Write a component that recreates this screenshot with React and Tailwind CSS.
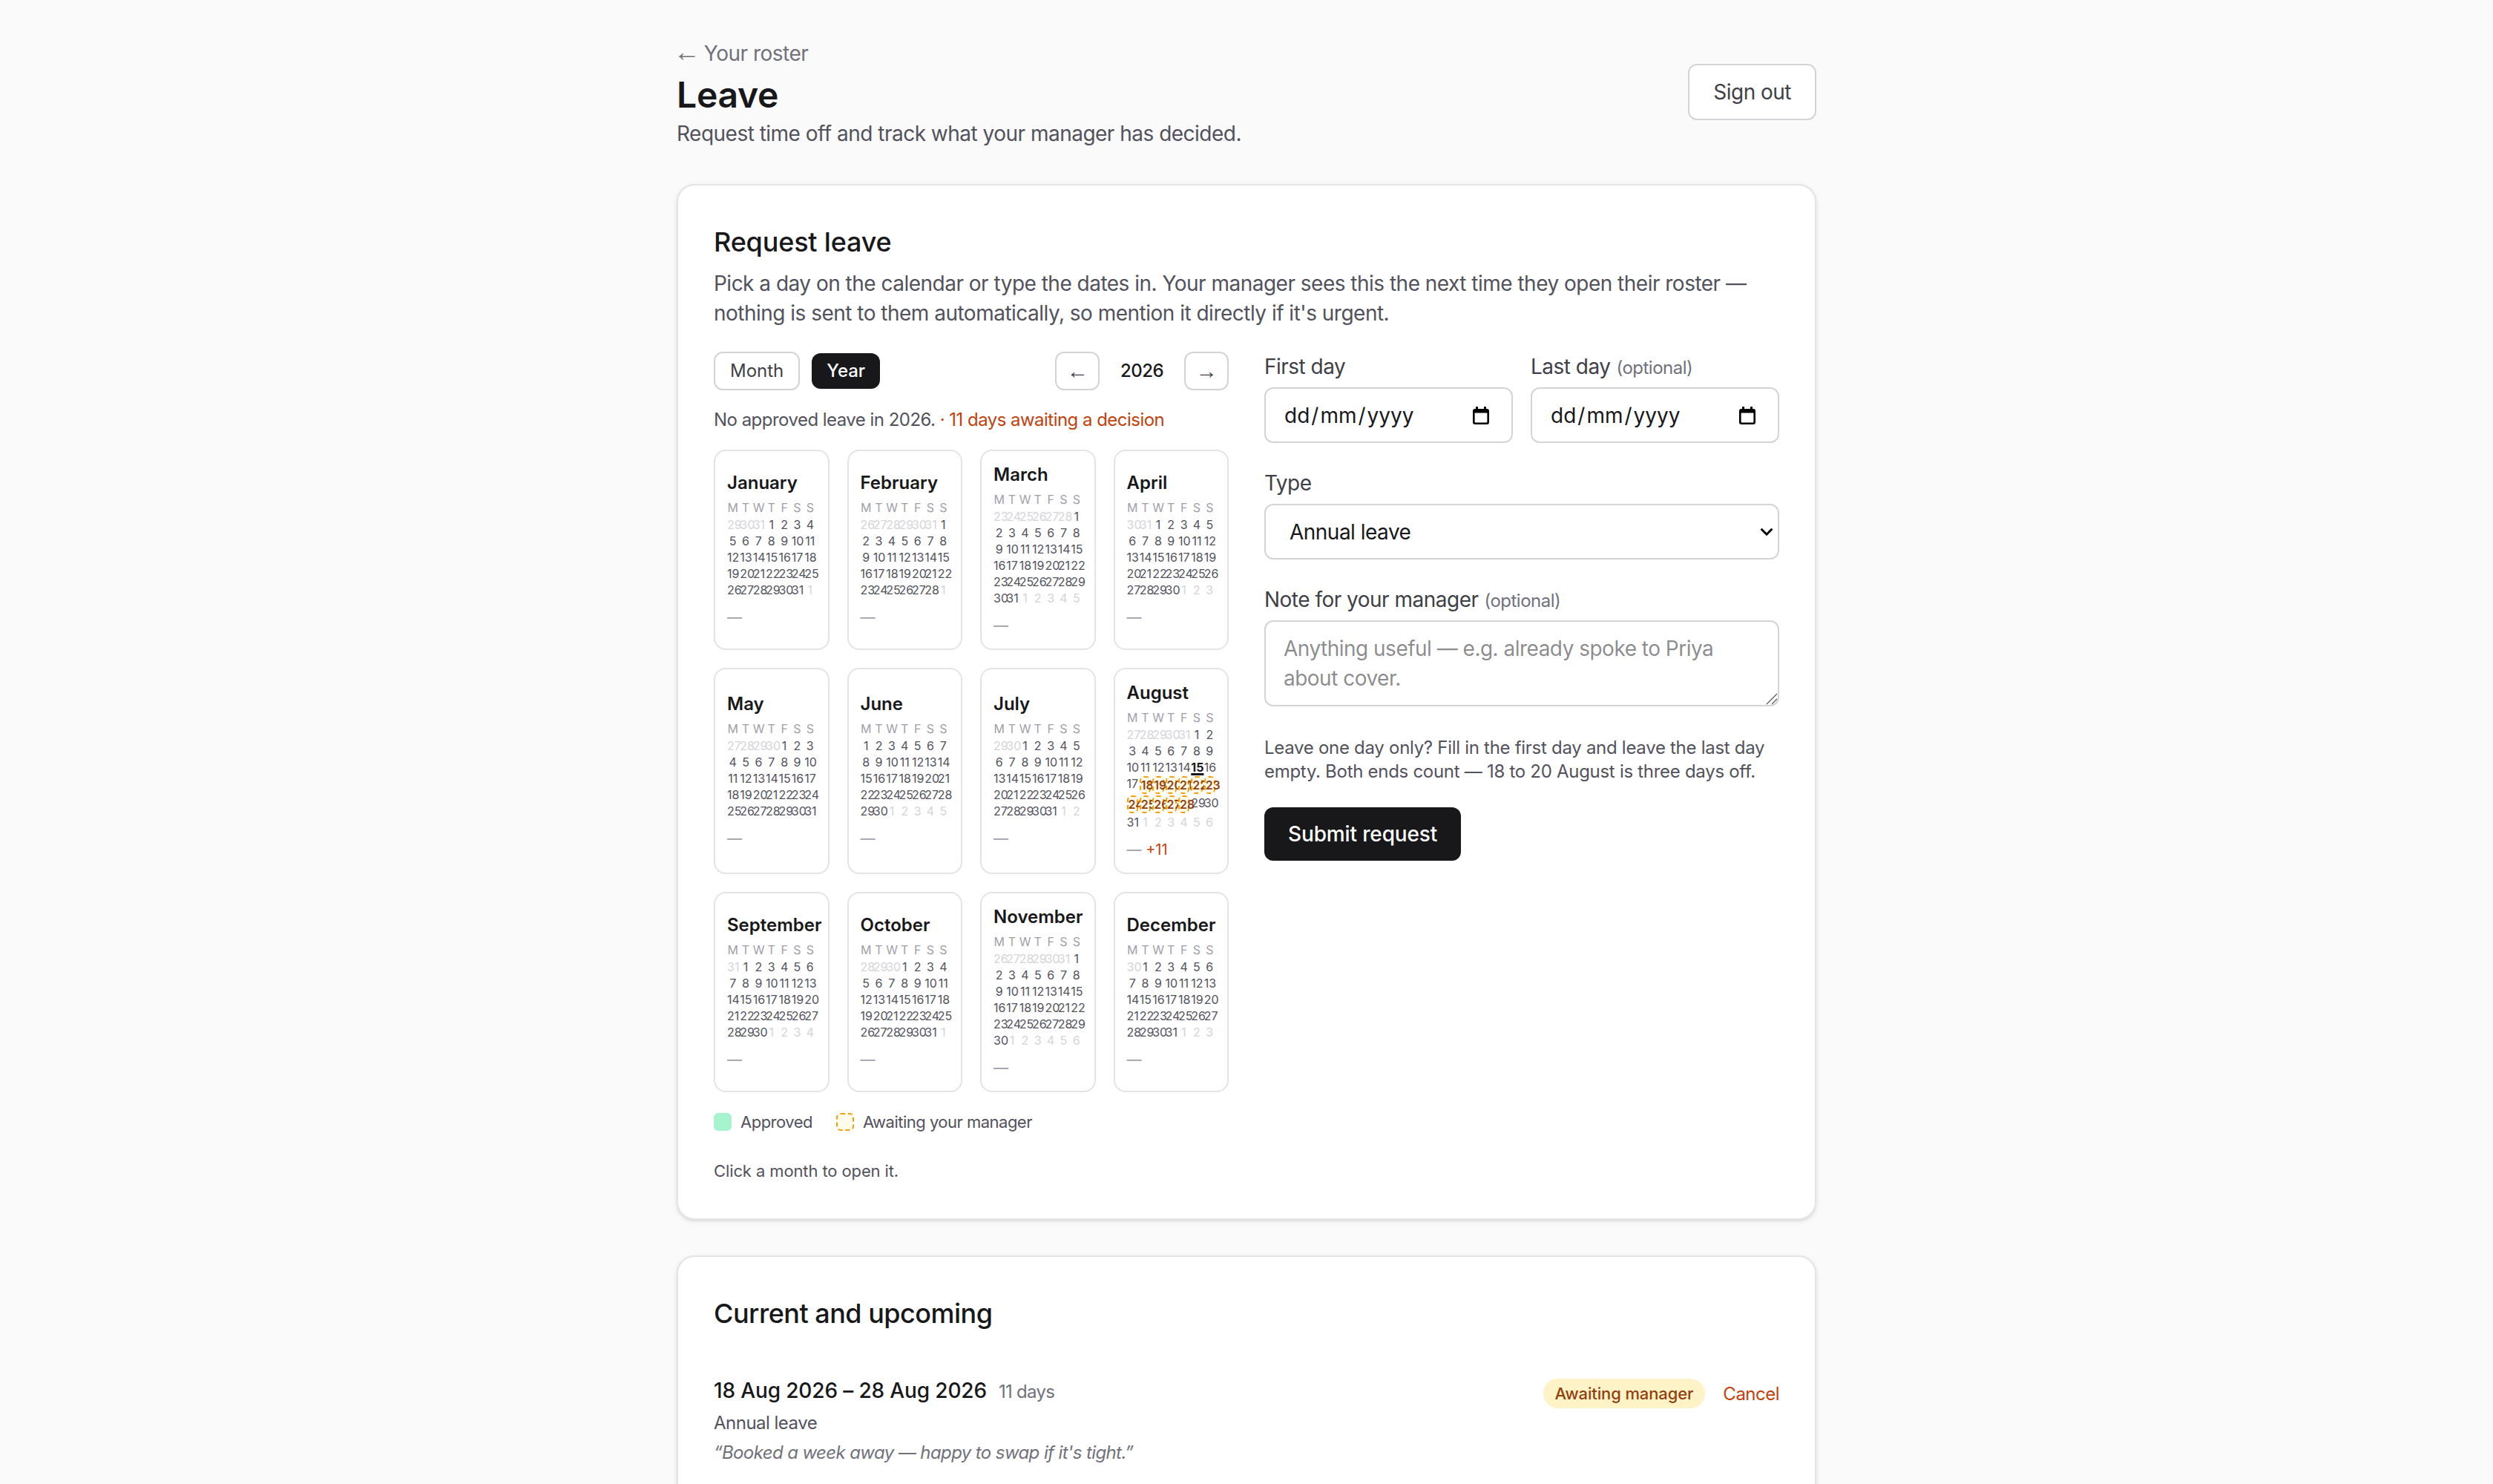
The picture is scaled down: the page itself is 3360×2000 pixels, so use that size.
import React from 'react';

const MONTHS = ['January', 'February', 'March', 'April', 'May', 'June', 'July', 'August', 'September', 'October', 'November', 'December'];
const WEEKDAYS = ['M', 'T', 'W', 'T', 'F', 'S', 'S'];

function buildDays(month) {
    const first = new Date(2026, month, 1);
    const last = new Date(2026, month + 1, 0);
    const lead = (first.getDay() + 6) % 7;
    const trail = (7 - ((lead + last.getDate()) % 7)) % 7;
    const days = [];
    for (let i = lead; i > 0; i--) {
        days.push({ day: new Date(2026, month, 1 - i).getDate(), outside: true });
    }
    for (let d = 1; d <= last.getDate(); d++) {
        days.push({ day: d, outside: false });
    }
    for (let i = 1; i <= trail; i++) {
        days.push({ day: i, outside: true });
    }
    return days;
}

function DayCell({ cell, month }) {
    if (cell.outside) {
        return <div className="text-center text-zinc-300">{cell.day}</div>;
    }
    const isAugust = month === 7;
    if (isAugust && cell.day >= 18 && cell.day <= 28) {
        return (
            <div className="relative text-center font-semibold text-[#92400e] bg-[#fffbeb] border border-dashed border-[#f59e0b] rounded-[3px]">
                {cell.day}
            </div>
        );
    }
    if (isAugust && cell.day === 15) {
        return <div className="relative z-10 text-center font-bold text-zinc-900 underline decoration-[1.5px] underline-offset-1">{cell.day}</div>;
    }
    return <div className="text-center text-zinc-600">{cell.day}</div>;
}

function MonthCard({ name, month }) {
    return (
        <button className="text-left tracking-normal bg-white border border-zinc-200 rounded-lg p-2">
            <div className="text-xs leading-4 font-semibold text-zinc-900 whitespace-nowrap">{name}</div>
            <div className="mt-[3px] grid grid-cols-7 gap-px text-[8px] leading-[10px]">
                {WEEKDAYS.map((w, i) => (
                    <div key={i} className="text-center text-zinc-400 leading-[11px]">{w}</div>
                ))}
                {buildDays(month).map((cell, i) => (
                    <DayCell key={i} cell={cell} month={month} />
                ))}
            </div>
            <div className="mt-1.5 text-[10px] leading-[15px] text-zinc-400">
                —{month === 7 && <span className="text-[#c2410c]"> +11</span>}
            </div>
        </button>
    );
}

function Label({ children, optional }) {
    return (
        <label className="block mb-1 text-sm text-zinc-700">
            {children}
            {optional && <span className="ml-1 text-xs text-zinc-500">(optional)</span>}
        </label>
    );
}

function DateField() {
    return (
        <div className="flex items-center justify-between h-[37.5px] pl-[12.5px] pr-3 text-sm tracking-normal bg-white border border-zinc-300 rounded-md">
            <span>dd<span className="mx-px">/</span>mm<span className="mx-px">/</span>yyyy</span>
            <svg width="11" height="12" viewBox="0 0 11 12" className="mr-[3px]">
                <path fillRule="evenodd" d="M2 0h1.5v1.5h4V0H9v1.5h.5A1.5 1.5 0 0 1 11 3v7.5A1.5 1.5 0 0 1 9.5 12h-8A1.5 1.5 0 0 1 0 10.5V3a1.5 1.5 0 0 1 1.5-1.5H2V0zM1.3 4.2v6a.5.5 0 0 0 .5.5h7.4a.5.5 0 0 0 .5-.5v-6H1.3z" fill="#000" />
            </svg>
        </div>
    );
}

export default function App() {
    return (
        <div className="[zoom:2] h-[1000px] overflow-hidden bg-[#fafafa] text-zinc-900 tracking-[-0.016em] font-[Inter,sans-serif]">
            <div className="w-[768px] mx-auto pt-[26px]">
                <header className="flex items-center justify-between">
                    <div>
                        <a className="block h-5 text-sm text-zinc-500">
                            <span className="-ml-0.5 -mr-px font-['Liberation_Sans'] text-[18px] leading-none">←</span> Your roster
                        </a>
                        <h1 className="mt-0.5 text-2xl font-semibold tracking-[-0.005em]">Leave</h1>
                        <p className="text-sm text-zinc-600">Request time off and track what your manager has decided.</p>
                    </div>
                    <button className="mb-[2px] px-4 py-2 text-sm text-zinc-700 bg-white border border-zinc-300 rounded-md">Sign out</button>
                </header>

                <section className="mt-6 p-6 bg-white border border-zinc-200 rounded-xl shadow-sm">
                    <h2 className="text-lg font-medium tracking-[-0.005em]">Request leave</h2>
                    <p className="mt-1 text-sm text-zinc-600">
                        Pick a day on the calendar or type the dates in. Your manager sees this the next time they open their roster — nothing is sent to them automatically, so mention it directly if it's urgent.
                    </p>

                    <div className="mt-4 grid grid-cols-2 gap-6">
                        <div>
                            <div className="flex items-center justify-between">
                                <div className="flex items-center gap-2 tracking-normal">
                                    <button className="px-2.5 py-1 text-xs text-zinc-700 border border-zinc-300 rounded-md">Month</button>
                                    <button className="px-2.5 py-1 text-xs font-medium text-white bg-[#18181b] rounded-md">Year</button>
                                </div>
                                <div className="flex items-center">
                                    <button className="w-[30px] h-[26px] text-[14.5px] leading-none text-zinc-700 font-['Liberation_Sans'] border border-zinc-300 rounded-md">←</button>
                                    <span className="w-[57px] text-center text-xs font-medium">2026</span>
                                    <button className="w-[30px] h-[26px] text-[14.5px] leading-none text-zinc-700 font-['Liberation_Sans'] border border-zinc-300 rounded-md">→</button>
                                </div>
                            </div>

                            <p className="mt-3 text-xs tracking-[-0.022em] text-zinc-600">
                                No approved leave in 2026.<span className="text-[#c2410c]"> · 11 days awaiting a decision</span>
                            </p>

                            <div className="mt-3 grid grid-cols-4 gap-3">
                                {MONTHS.map((name, i) => (
                                    <MonthCard key={name} name={name} month={i} />
                                ))}
                            </div>

                            <div className="mt-3 flex items-center gap-4 text-[11px] leading-4 text-zinc-600">
                                <span className="flex items-center gap-1.5">
                                    <span className="w-3 h-3 rounded-[3px] bg-[#a7f3d0]"></span>
                                    Approved
                                </span>
                                <span className="flex items-center gap-1.5">
                                    <span className="w-3 h-3 rounded-[3px] bg-[#fffbeb] border border-dashed border-[#f59e0b]"></span>
                                    Awaiting your manager
                                </span>
                            </div>

                            <p className="mt-[17px] text-[11px] leading-4 tracking-[-0.005em] text-zinc-600">Click a month to open it.</p>
                        </div>

                        <div>
                            <div className="grid grid-cols-2 gap-3">
                                <div>
                                    <Label>First day</Label>
                                    <DateField />
                                </div>
                                <div>
                                    <Label optional>Last day</Label>
                                    <DateField />
                                </div>
                            </div>

                            <div className="mt-[17px]">
                                <Label>Type</Label>
                                <div className="relative">
                                    <select className="block w-full h-[37.5px] pl-4 pr-3 text-sm bg-white border border-zinc-300 rounded-md appearance-none" defaultValue="annual">
                                        <option value="annual">Annual leave</option>
                                        <option value="sick">Sick leave</option>
                                    </select>
                                    <svg width="9" height="6" viewBox="0 0 9 6" fill="none" className="absolute right-[4px] top-1/2 -translate-y-1/2">
                                        <path d="M0.8 0.9L4.5 4.6L8.2 0.9" stroke="#000" strokeWidth="1.5" />
                                    </svg>
                                </div>
                            </div>

                            <div className="mt-[17px]">
                                <Label optional>Note for your manager</Label>
                                <div className="relative">
                                    <textarea
                                        rows={2}
                                        className="block w-full px-3 py-2 text-sm bg-white border border-zinc-300 rounded-md resize-none"
                                        placeholder="Anything useful — e.g. already spoke to Priya about cover."
                                    ></textarea>
                                    <svg width="8" height="8" viewBox="0 0 8 8" fill="none" className="absolute right-[1px] bottom-[1px]">
                                        <path d="M0.5 7.5L7.5 0.5M4 7.5L7.5 4" stroke="#555" strokeWidth="0.6" />
                                    </svg>
                                </div>
                            </div>

                            <p className="mt-5 text-xs tracking-[-0.012em] text-zinc-600">
                                Leave one day only? Fill in the first day and leave the last day empty. Both ends count — 18 to 20 August is three days off.
                            </p>

                            <button className="mt-4 px-4 py-2 text-sm font-medium tracking-[-0.005em] text-white bg-[#18181b] rounded-md">Submit request</button>
                        </div>
                    </div>
                </section>

                <section className="mt-6 p-6 bg-white border border-zinc-200 rounded-xl shadow-sm">
                    <h2 className="text-lg font-medium">Current and upcoming</h2>
                    <div className="mt-4 py-3 flex items-start justify-between">
                        <div>
                            <div className="flex items-baseline gap-2">
                                <span className="text-sm font-medium tracking-[-0.005em]">18 Aug 2026 – 28 Aug 2026</span>
                                <span className="text-xs tracking-[-0.03em] text-zinc-500">11 days</span>
                            </div>
                            <div className="mt-1 text-xs text-zinc-600">Annual leave</div>
                            <div className="mt-1 text-xs italic tracking-[-0.025em] text-zinc-500">“Booked a week away — happy to swap if it's tight.”</div>
                        </div>
                        <div className="flex items-center gap-3 mt-[2px]">
                            <span className="px-2 py-0.5 text-[11px] leading-4 font-medium tracking-[-0.006em] text-[#92400e] bg-[#fef3c7] rounded-full">Awaiting manager</span>
                            <button className="mt-px text-xs text-[#c2410c]">Cancel</button>
                        </div>
                    </div>
                </section>
            </div>
        </div>
    );
}
